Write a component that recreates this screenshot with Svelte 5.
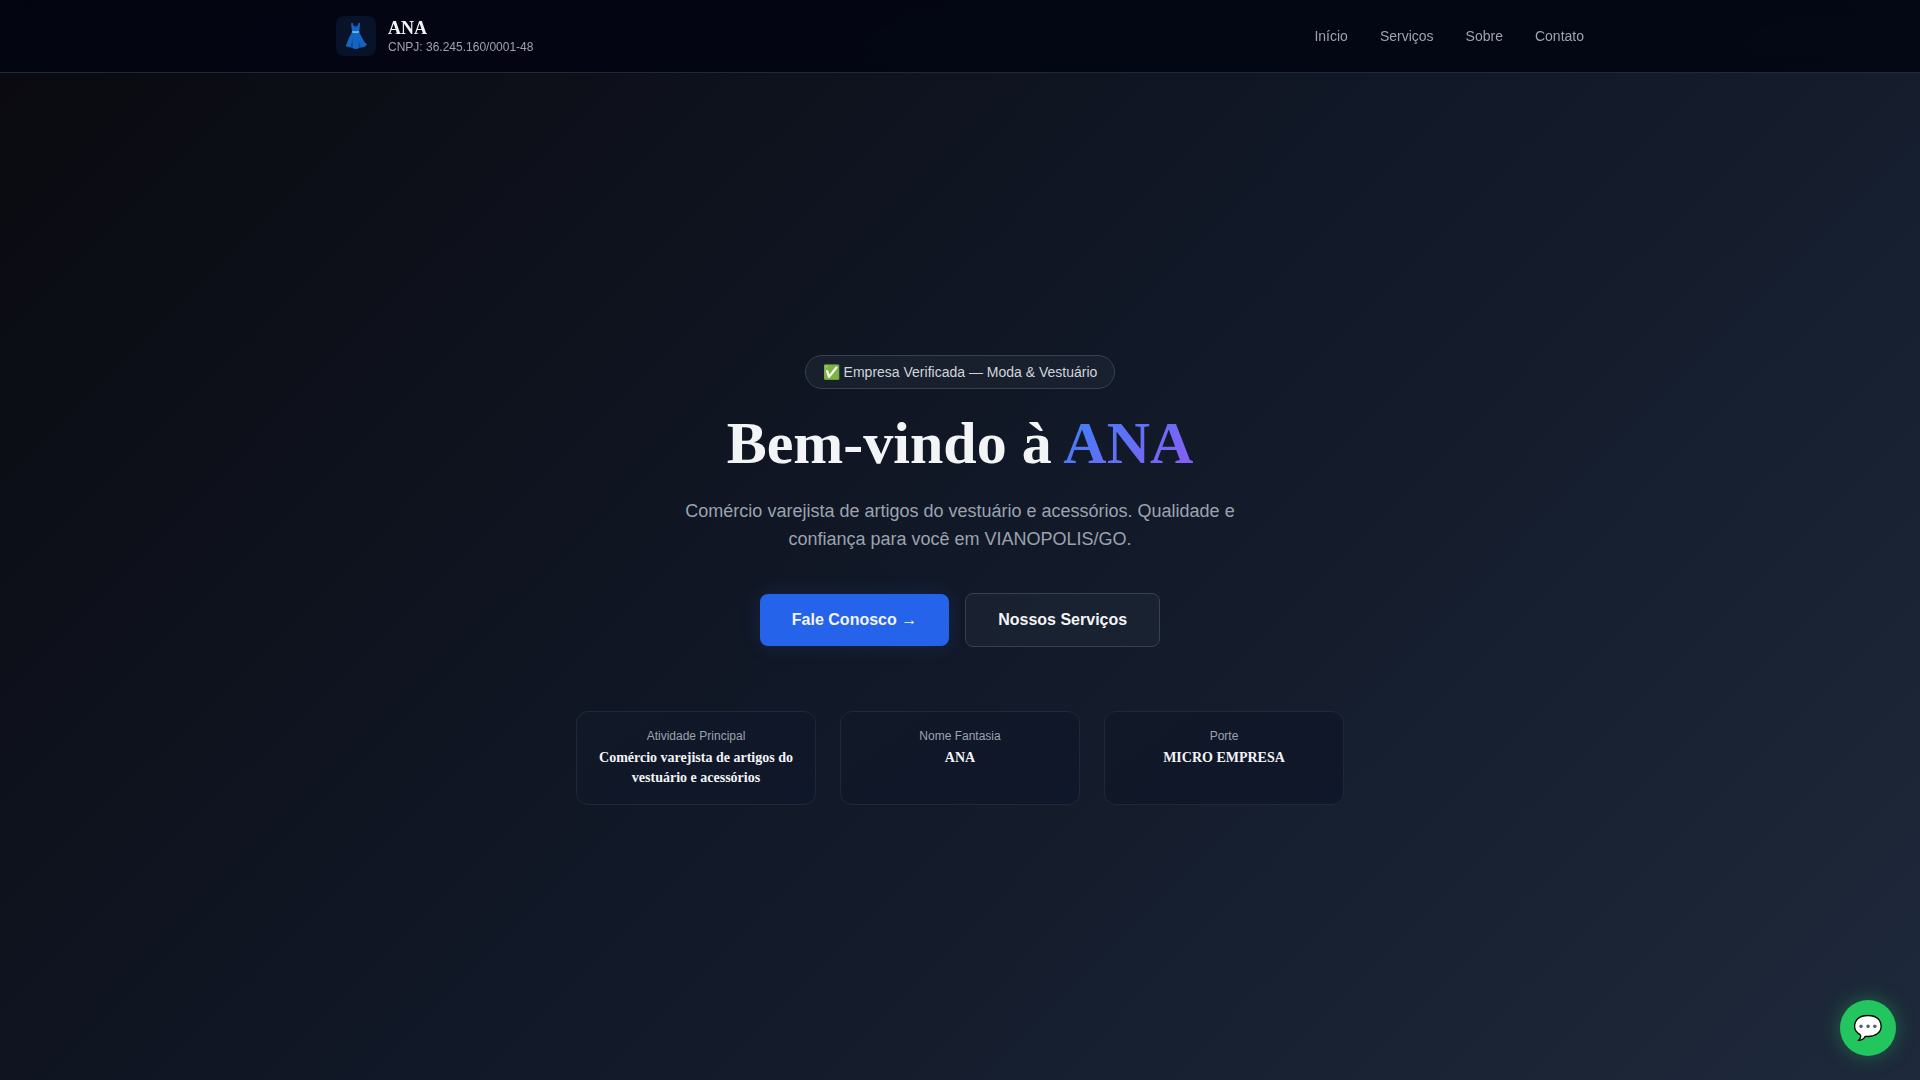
<script lang="ts">
	const links = [
		{ href: '#inicio', label: 'Início' },
		{ href: '#servicos', label: 'Serviços' },
		{ href: '#sobre', label: 'Sobre' },
		{ href: '#contato', label: 'Contato' }
	];

	const facts = [
		{ label: 'Atividade Principal', value: 'Comércio varejista de artigos do vestuário e acessórios' },
		{ label: 'Nome Fantasia', value: 'ANA' },
		{ label: 'Porte', value: 'MICRO EMPRESA' }
	];
</script>

<header class="header">
	<div class="header-inner">
		<div class="brand">
			<span class="logo">👗</span>
			<div>
				<div class="brand-name">ANA</div>
				<div class="brand-id">CNPJ: 36.245.160/0001-48</div>
			</div>
		</div>
		<nav class="nav">
			{#each links as link}
				<a href={link.href}>{link.label}</a>
			{/each}
		</nav>
	</div>
</header>

<main class="hero" id="inicio">
	<div class="hero-inner">
		<span class="badge">✅ Empresa Verificada — Moda &amp; Vestuário</span>
		<h1>Bem-vindo à <span class="accent">ANA</span></h1>
		<p class="lead">
			Comércio varejista de artigos do vestuário e acessórios. Qualidade e confiança para você em
			VIANOPOLIS/GO.
		</p>
		<div class="actions">
			<a class="btn primary" href="#contato">Fale Conosco →</a>
			<a class="btn secondary" href="#servicos">Nossos Serviços</a>
		</div>
		<div class="facts">
			{#each facts as fact}
				<div class="fact">
					<div class="fact-label">{fact.label}</div>
					<div class="fact-value">{fact.value}</div>
				</div>
			{/each}
		</div>
	</div>
</main>

<a class="chat" href="#contato" aria-label="Conversar">💬</a>

<style>
	:global(body) {
		background: #030712;
		color: #f3f4f6;
		font-family: 'Liberation Sans', Arial, sans-serif;
		line-height: 24px;
	}

	a {
		color: inherit;
		text-decoration: none;
	}

	.header {
		position: fixed;
		inset: 0 0 auto;
		z-index: 10;
		background: rgba(2, 6, 18, 0.9);
		border-bottom: 1px solid #1e293b;
		backdrop-filter: blur(12px);
	}

	.header-inner {
		display: flex;
		align-items: center;
		justify-content: space-between;
		box-sizing: border-box;
		max-width: 1280px;
		margin: 0 auto;
		padding: 16px;
	}

	.brand {
		display: flex;
		align-items: center;
		gap: 12px;
	}

	.logo {
		display: grid;
		place-items: center;
		width: 40px;
		height: 40px;
		border-radius: 8px;
		background: rgba(59, 130, 246, 0.1);
		font-size: 24px;
	}

	.brand-name {
		font: bold 18px/22px 'Liberation Serif', serif;
	}

	.brand-id {
		color: #9ca3af;
		font-size: 12px;
		line-height: 16px;
	}

	.nav {
		display: flex;
		gap: 32px;
		color: #9ca3af;
		font-size: 14px;
	}

	.nav a:hover {
		color: #f3f4f6;
	}

	.hero {
		display: flex;
		align-items: center;
		justify-content: center;
		box-sizing: border-box;
		min-height: 100vh;
		padding: 80px 16px 0;
		background: linear-gradient(135deg, #0a0a0f 0%, #111827 50%, #1e293b 100%);
		text-align: center;
	}

	.hero-inner {
		width: 100%;
		max-width: 768px;
	}

	.badge {
		display: inline-block;
		padding: 6px 17px;
		border: 1px solid #374151;
		border-radius: 99px;
		background: rgba(31, 41, 55, 0.5);
		color: #d1d5db;
		font-size: 14px;
		line-height: 20px;
	}

	h1 {
		margin: 24px 0;
		font: bold 60px/60px 'Liberation Serif', serif;
	}

	.accent {
		background: linear-gradient(135deg, #3b82f6, #8b5cf6);
		background-clip: text;
		color: transparent;
	}

	.lead {
		max-width: 576px;
		margin: 0 auto 40px;
		color: #9ca3af;
		font-size: 18px;
		line-height: 28px;
	}

	.actions {
		display: flex;
		flex-wrap: wrap;
		align-items: center;
		justify-content: center;
		gap: 16px;
		margin-bottom: 64px;
	}

	.btn {
		padding: 14px 32px;
		border-radius: 8px;
		font-size: 16px;
		font-weight: bold;
	}

	.primary {
		background: #2563eb;
		box-shadow: 0 0 20px rgba(59, 130, 246, 0.15);
	}

	.secondary {
		border: 1px solid #374151;
		background: rgba(31, 41, 55, 0.5);
	}

	.facts {
		display: grid;
		grid-template-columns: repeat(auto-fit, minmax(200px, 1fr));
		gap: 24px;
	}

	.fact {
		padding: 16px;
		border: 1px solid #1f2937;
		border-radius: 12px;
		background: linear-gradient(145deg, #111827, #0f172a);
	}

	.fact-label {
		color: #9ca3af;
		font-size: 12px;
		line-height: 16px;
	}

	.fact-value {
		margin-top: 4px;
		font: bold 14px/20px 'Liberation Serif', serif;
	}

	.chat {
		position: fixed;
		right: 24px;
		bottom: 24px;
		display: grid;
		place-items: center;
		width: 56px;
		height: 56px;
		border-radius: 50%;
		background: #22c55e;
		box-shadow: 0 0 20px rgba(34, 197, 94, 0.4);
		font-size: 24px;
	}
</style>
